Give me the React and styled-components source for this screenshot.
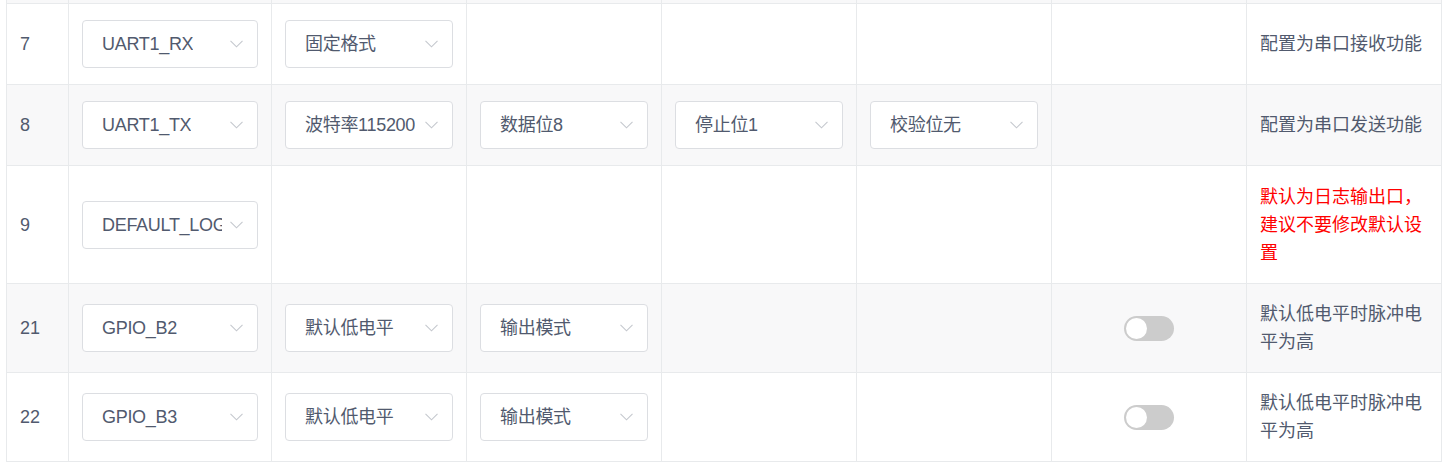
import React from "react";
import styled, { createGlobalStyle } from "styled-components";

const GlobalStyle = createGlobalStyle`
  html, body { margin: 0; padding: 0; background: #fff; }
  body {
    font-family: "Liberation Sans", Arial, "Noto Sans CJK SC", sans-serif;
    color: #515a6e;
  }
  * { box-sizing: border-box; }
`;

const Page = styled.div`
  width: 1444px;
  height: 466px;
  overflow: hidden;
  padding: 0 3px 0 6px;
`;

const Table = styled.div`
  width: 1436px;
  border-left: 1px solid #e8eaec;
`;

const Row = styled.div`
  display: grid;
  grid-template-columns: 62px 203px repeat(6, 195px);
  background: ${(p) => (p.$striped ? "#f8f8f9" : "#ffffff")};
  height: ${(p) => (p.$stub ? "4px" : "auto")};
  overflow: hidden;
`;

const Cell = styled.div`
  display: flex;
  align-items: center;
  justify-content: ${(p) => (p.$center ? "center" : "flex-start")};
  padding: ${(p) => (p.$stub ? "0" : p.$tall ? "17px 13px 16px" : "16px 13px")};
  border-right: 1px solid #e8eaec;
  border-bottom: 1px solid #e8eaec;
  font-size: 18px;
  line-height: 28px;
  color: ${(p) => (p.$warn ? "#ff0000" : "#515a6e")};
  min-width: 0;
  word-break: break-all;
`;

const SelectBox = styled.div`
  position: relative;
  width: 100%;
  height: 48px;
  border: 1px solid #dcdee2;
  border-radius: 4px;
  background: #fff;
  display: flex;
  align-items: center;
  padding: 0 35px 0 19px;
`;

const SelectText = styled.span`
  display: block;
  white-space: nowrap;
  overflow: hidden;
  font-size: 18px;
  letter-spacing: -0.3px;
  color: #515a6e;
  line-height: 46px;
`;

const Arrow = styled.svg`
  position: absolute;
  right: 14px;
  top: 50%;
  margin-top: -4px;
  width: 13px;
  height: 8px;
`;

const Switch = styled.span`
  position: relative;
  display: inline-block;
  width: 50px;
  height: 25px;
  border-radius: 13px;
  background: #cccccc;
  &::after {
    content: "";
    position: absolute;
    left: 2px;
    top: 2px;
    width: 21px;
    height: 21px;
    border-radius: 50%;
    background: #fff;
  }
`;

const Select = ({ value }) => (
  <SelectBox>
    <SelectText>{value}</SelectText>
    <Arrow viewBox="0 0 13 8" fill="none">
      <polyline points="0.5,0.8 6.5,6.8 12.5,0.8" stroke="#c5c8ce" strokeWidth="1.1" />
    </Arrow>
  </SelectBox>
);

const rows = [
  { no: "7", selects: ["UART1_RX", "固定格式"], desc: "配置为串口接收功能" },
  {
    no: "8",
    selects: ["UART1_TX", "波特率115200", "数据位8", "停止位1", "校验位无"],
    desc: "配置为串口发送功能",
  },
  { no: "9", selects: ["DEFAULT_LOG"], desc: "默认为日志输出口，建议不要修改默认设置", warn: true },
  { no: "21", selects: ["GPIO_B2", "默认低电平", "输出模式"], toggle: true, desc: "默认低电平时脉冲电平为高" },
  { no: "22", selects: ["GPIO_B3", "默认低电平", "输出模式"], toggle: true, desc: "默认低电平时脉冲电平为高" },
];

export default function App() {
  return (
    <>
      <GlobalStyle />
      <Page>
        <Table>
          <Row $striped $stub>
            {Array.from({ length: 8 }).map((_, i) => (
              <Cell key={i} $stub />
            ))}
          </Row>
          {rows.map((r, idx) => (
            <Row key={r.no} $striped={idx % 2 === 1}>
              <Cell>{r.no}</Cell>
              {Array.from({ length: 5 }).map((_, i) => (
                <Cell key={i}>{r.selects[i] ? <Select value={r.selects[i]} /> : null}</Cell>
              ))}
              <Cell $center>{r.toggle ? <Switch /> : null}</Cell>
              <Cell $warn={r.warn} $tall={r.warn}>{r.desc}</Cell>
            </Row>
          ))}
        </Table>
      </Page>
    </>
  );
}
